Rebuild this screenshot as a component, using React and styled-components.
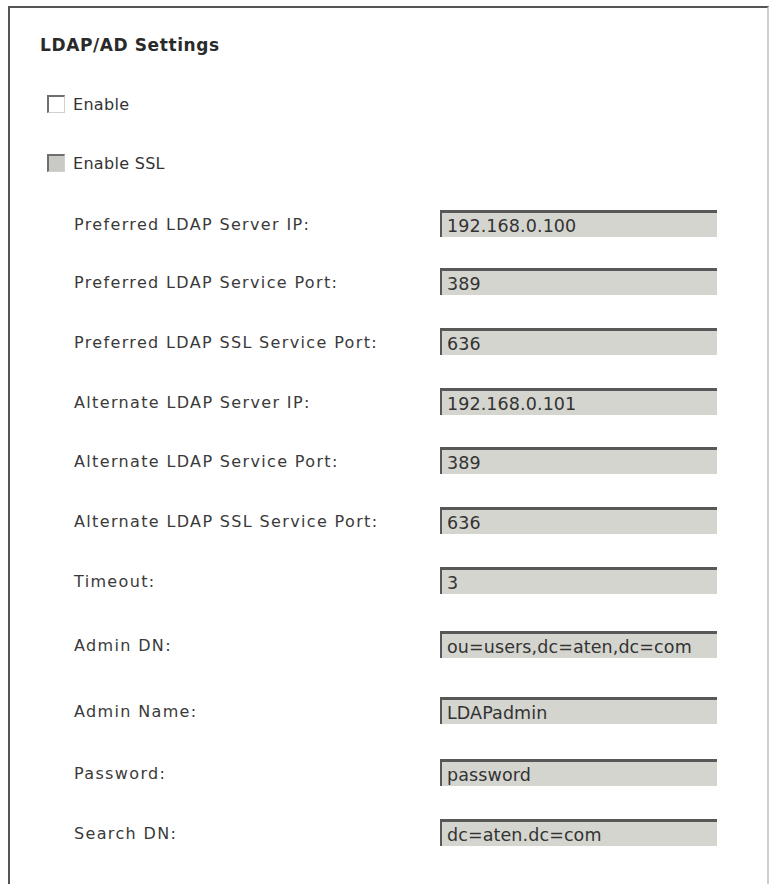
import styled, { createGlobalStyle } from "styled-components";

const GlobalStyle = createGlobalStyle`
  body {
    margin: 0;
    background: #fff;
    font-family: "DejaVu Sans", Verdana, sans-serif;
  }
`;

const Panel = styled.div`
  box-sizing: border-box;
  margin: 6px 0 0 8px;
  width: 761px;
  height: 878px;
  border-top: 2px solid #555;
  border-left: 2px solid #555;
  border-right: 2px solid #cfcfcf;
  padding-left: 30px;
  display: flex;
  flex-direction: column;
`;

const Title = styled.h2`
  margin: 27px 0 0;
  font-size: 17px;
  line-height: 20px;
  letter-spacing: 0.6px;
  font-weight: bold;
  color: #2a2a2a;
`;

const CheckRow = styled.label`
  display: flex;
  align-items: center;
  gap: 8px;
  height: 20px;
  margin: ${(p) => p.$top}px 0 0 7px;
  font-size: 16px;
  letter-spacing: 0.3px;
  color: #333;
`;

const Box = styled.span`
  box-sizing: border-box;
  width: 18px;
  height: 18px;
  border-top: 2px solid #6f6f6f;
  border-left: 2px solid #6f6f6f;
  border-right: 1px solid #d0d0d0;
  border-bottom: 1px solid #d0d0d0;
  background: ${(p) => (p.$disabled ? "#c9c9c6" : "#fff")};
`;

const Fields = styled.div`
  display: flex;
  flex-direction: column;
  margin-top: 37px;
`;

const Row = styled.div`
  display: grid;
  grid-template-columns: 400px 277px;
  align-items: center;
  margin-top: ${(p) => p.$top || 0}px;
`;

const Label = styled.span`
  padding: 2px 0 0 34px;
  font-size: 16px;
  letter-spacing: 1.35px;
  color: #3a3a3a;
  white-space: nowrap;
`;

const Field = styled.input`
  box-sizing: border-box;
  width: 277px;
  height: 27px;
  margin: 0;
  padding: 1px 0 0 5px;
  border: none;
  border-top: 3px solid #585858;
  border-left: 2px solid #585858;
  background: #d5d5d0;
  font-family: "DejaVu Sans", Verdana, sans-serif;
  font-size: 17.5px;
  letter-spacing: 0.1px;
  color: #333;
  outline: none;
`;

const rows = [
  ["Preferred LDAP Server IP:", "192.168.0.100", 0],
  ["Preferred LDAP Service Port:", "389", 31],
  ["Preferred LDAP SSL Service Port:", "636", 33],
  ["Alternate LDAP Server IP:", "192.168.0.101", 33],
  ["Alternate LDAP Service Port:", "389", 32],
  ["Alternate LDAP SSL Service Port:", "636", 33],
  ["Timeout:", "3", 33],
  ["Admin DN:", "ou=users,dc=aten,dc=com", 37],
  ["Admin Name:", "LDAPadmin", 39],
  ["Password:", "password", 35],
  ["Search DN:", "dc=aten.dc=com", 33]
];

export default function App() {
  return (
    <>
      <GlobalStyle />
      <Panel>
        <Title>LDAP/AD Settings</Title>
        <CheckRow $top={39}>
          <Box />
          Enable
        </CheckRow>
        <CheckRow $top={39}>
          <Box $disabled />
          Enable SSL
        </CheckRow>
        <Fields>
          {rows.map(([label, value, top]) => (
            <Row key={label} $top={top}>
              <Label>{label}</Label>
              <Field readOnly defaultValue={value} />
            </Row>
          ))}
        </Fields>
      </Panel>
    </>
  );
}
